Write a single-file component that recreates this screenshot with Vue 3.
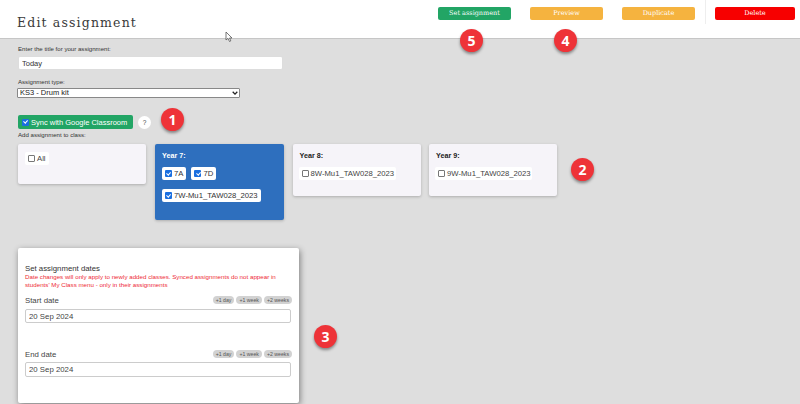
<script setup>
const badges = [
  { n: 1, cls: 'b1' }, { n: 2, cls: 'b2' }, { n: 3, cls: 'b3' }, { n: 4, cls: 'b4' }, { n: 5, cls: 'b5' }
]
const dates = [
  { label: 'Start date', cls: 'first', chips: ['+1 day', '+1 week', '+2 weeks'] },
  { label: 'End date', cls: 'second', chips: ['+1 day', '+1 week', '+2 weeks'] }
]
</script>

<template>
  <div class="page">
    <header class="top">
      <h1>Edit assignment</h1>
      <div class="actions">
        <button class="btn green">Set assignment</button>
        <button class="btn amber">Preview</button>
        <button class="btn amber">Duplicate</button>
        <span class="divider"></span>
        <button class="btn red">Delete</button>
      </div>
    </header>

    <main class="body">
      <label class="lab">Enter the title for your assignment:</label>
      <input class="title" value="Today" />
      <label class="lab type">Assignment type:</label>
      <div class="selwrap">
        <select class="sel"><option>KS3 - Drum kit</option></select>
        <svg class="chev" width="6" height="4" viewBox="0 0 6 4"><path d="M.7.8 3 3.100 5.300.8" fill="none" stroke="#222" stroke-width="1.300"/></svg>
      </div>

      <div class="syncrow">
        <label class="sync"><input type="checkbox" checked /><span>Sync with Google Classroom</span></label>
        <span class="help">?</span>
      </div>
      <div class="lab add">Add assignment to class:</div>

      <div class="cards">
        <section class="card all">
          <label class="chk"><input type="checkbox" />All</label>
        </section>
        <section class="card blue">
          <h3>Year 7:</h3>
          <div class="row">
            <label class="chk"><input type="checkbox" checked />7A</label>
            <label class="chk"><input type="checkbox" checked />7D</label>
          </div>
          <div class="row">
            <label class="chk"><input type="checkbox" checked />7W-Mu1_TAW028_2023</label>
          </div>
        </section>
        <section class="card y8">
          <h3>Year 8:</h3>
          <label class="chk tight"><input type="checkbox" />8W-Mu1_TAW028_2023</label>
        </section>
        <section class="card y8">
          <h3>Year 9:</h3>
          <label class="chk tight"><input type="checkbox" />9W-Mu1_TAW028_2023</label>
        </section>
      </div>

      <section class="dates">
        <div class="dtitle">Set assignment dates</div>
        <p class="warn">Date changes will only apply to newly added classes. Synced assignments do not appear in students' My Class menu - only in their assignments</p>
        <div v-for="d in dates" :key="d.label" class="dfield" :class="d.cls">
          <div class="dhead">
            <span>{{ d.label }}</span>
            <span class="chips"><i v-for="c in d.chips" :key="c">{{ c }}</i></span>
          </div>
          <input class="dinput" value="20 Sep 2024" />
        </div>
      </section>
    </main>

    <svg class="cursor" width="8" height="12" viewBox="0 0 8 12"><path d="M1 1v8l2-1.700L4.500 10.500l1.300-.6L4.500 7H7z" fill="#fff" stroke="#555" stroke-width=".8"/></svg>
    <span v-for="b in badges" :key="b.n" class="badge" :class="b.cls">{{ b.n }}</span>
  </div>
</template>

<style>
html, body { margin: 0; background: #dedede; }
</style>

<style scoped>
.page { position: relative; width: 800px; height: 404px; overflow: hidden; background: #dedede; font-family: "Liberation Sans", Arial, sans-serif; color: #222; }
.top { height: 38px; background: #fff; border-bottom: 1px solid #c6c6c6; display: flex; justify-content: space-between; }
h1 { margin: 15px 0 0 17px; font: 400 12.500px/15px "DejaVu Serif", serif; letter-spacing: 1.150px; color: #3a3a3a; }
.actions { display: flex; align-items: flex-start; padding: 7px 5px 0 0; }
.btn { width: 73px; height: 13px; padding: 0; border: 0; border-radius: 2px; color: #fff; font: 400 6.500px/13px "DejaVu Serif", serif; margin-right: 19px; }
.green { background: #22a565; }
.amber { background: #f5b33f; }
.red { background: #f70000; width: 80px; margin: 0; }
.divider { width: 1px; height: 24px; margin: -7px 9px 0 -9px; background: #eee; }
.body { padding: 6px 0 0 18px; }
.lab { display: block; font-size: 6.100px; line-height: 8px; color: #333; }
.title { display: block; box-sizing: border-box; width: 265px; height: 14px; margin: 3px 0 0; padding: 0 3px; border: 1px solid #ddd; border-radius: 2px; background: #fff; font: 7.500px "Liberation Sans", sans-serif; color: #333; outline: 0; }
.type { margin-top: 8px; }
.selwrap { position: relative; width: 223px; height: 10px; margin: 2px 0 0 -1px; }
.sel { display: block; appearance: none; width: 100%; height: 100%; box-sizing: border-box; margin: 0; padding: 0 0 0 2px; border: 1px solid #888; border-radius: 1px; background: #fff; font: 7.500px/8px "Liberation Sans", sans-serif; color: #222; }
.chev { position: absolute; right: 2px; top: 3px; pointer-events: none; }
.syncrow { display: flex; align-items: center; margin-top: 17px; height: 14px; }
.sync { display: flex; align-items: center; width: 115px; height: 14px; box-sizing: border-box; padding-left: 4px; border-radius: 2px; background: #22a565; color: #fff; font-size: 7.500px; white-space: nowrap; }
.sync input { margin: 0 2px 0 0; }
.help { width: 13px; height: 13px; margin-left: 5px; border-radius: 50%; background: #fff; font-size: 6.500px; line-height: 13px; text-align: center; color: #444; }
.add { margin-top: 2px; }
.cards { display: flex; align-items: flex-start; gap: 8.500px; margin-top: 5px; }
.card { box-sizing: border-box; width: 128px; border-radius: 2px; background: #f6f4f9; box-shadow: 0 1px 3px rgba(0,0,0,.22); padding: 7px; font-size: 7.500px; color: #444; }
.all { height: 40px; padding: 8px 7px; }
.blue { height: 76px; width: 129.500px; background: #2e6fbe; padding: 7px 7.500px; }
.y8 { height: 52px; }
h3 { margin: 0 0 5px; font-size: 7.200px; line-height: 9px; font-weight: 700; color: #222; }
.blue h3 { color: #fff; margin-bottom: 7px; }
.row { display: flex; gap: 5px; margin-bottom: 9px; }
.chk { display: inline-flex; align-items: center; height: 13px; padding: 0 3px; border-radius: 2px; background: #fff; font-size: 7.700px; color: #444; white-space: nowrap; }
.blue .chk { color: #333; }
input[type="checkbox"] { appearance: none; position: relative; flex: none; box-sizing: border-box; width: 7px; height: 7px; margin: 0 2px 0 0; border: 1px solid #777; border-radius: 1px; background: #fff; }
input[type="checkbox"]:checked { border: 0; background: #1a6fe0; }
input[type="checkbox"]:checked::after { content: ""; position: absolute; left: 2.400px; top: .8px; width: 1.500px; height: 3.400px; border: solid #fff; border-width: 0 1px 1px 0; transform: rotate(42deg); }
.tight { width: 97px; box-sizing: border-box; margin: 2px 0 0 -1px; }
.dates { box-sizing: border-box; width: 281px; height: 155px; margin-top: 28px; padding: 16px 7px 0 7px; background: #fff; border-radius: 2px; box-shadow: 1px 2px 6px rgba(0,0,0,.45); }
.dtitle { font-size: 7.800px; line-height: 9px; color: #333; }
.warn { margin: 0; height: 15px; font-size: 6.200px; line-height: 7.500px; color: #ee2a35; }
.first { margin-top: 7px; height: 54px; }
.dhead { display: flex; justify-content: space-between; align-items: center; height: 10px; font-size: 7.800px; color: #444; }
.chips { display: flex; gap: 2px; }
.chips i { padding: 0 3px; height: 8px; border-radius: 4px; background: #d2d2d2; font: 400 5.200px/8px "Liberation Sans", sans-serif; color: #555; }
.dinput { display: block; box-sizing: border-box; width: 266px; height: 14px; margin-top: 4px; padding: 0 3px; border: 1px solid #ccc; border-radius: 2px; font: 7.800px "Liberation Sans", sans-serif; color: #444; background: #fff; outline: 0; }
.second .dinput { height: 15px; margin-top: 3px; }
.cursor { position: absolute; left: 225px; top: 31px; }
.badge { position: absolute; width: 23px; height: 23px; border-radius: 50%; background: #ee3338; color: #fff; font: 700 14px/23px "Open Sans", sans-serif; text-align: center; box-shadow: 0 2px 3px rgba(0,0,0,.4); }
.b1 { left: 161px; top: 108px; }
.b2 { left: 571px; top: 158px; }
.b3 { left: 314px; top: 325px; }
.b4 { left: 554px; top: 29px; }
.b5 { left: 460px; top: 29px; }
</style>
